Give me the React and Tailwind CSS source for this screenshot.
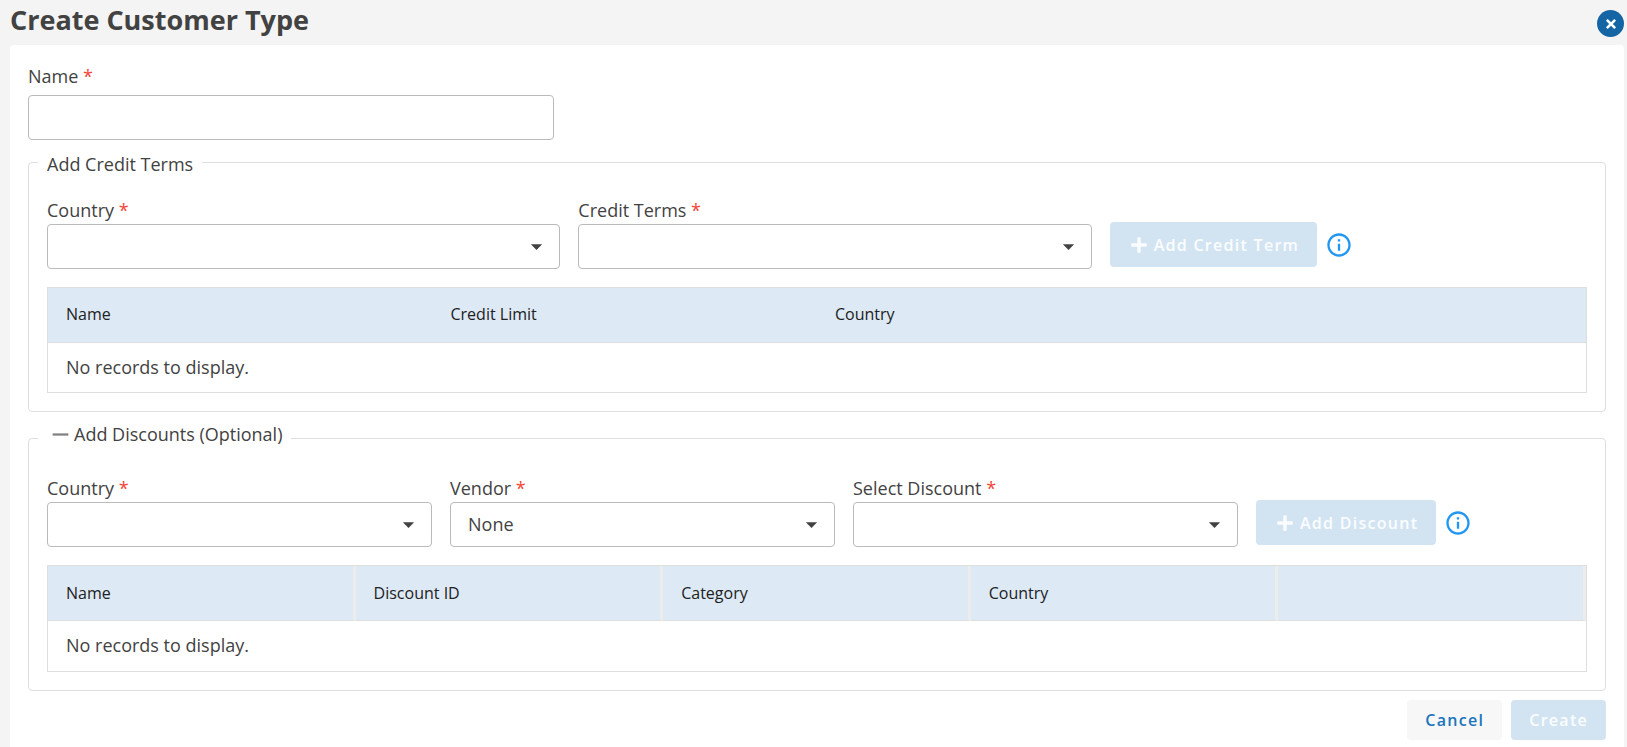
import React, { useState } from "react";
import { FaPlus, FaTimes } from "react-icons/fa";
import { MdArrowDropDown, MdInfoOutline, MdRemove } from "react-icons/md";

const creditColumns = ["Name", "Credit Limit", "Country", ""];
const discountColumns = ["Name", "Discount ID", "Category", "Country", ""];

const Label = ({ htmlFor, children }) => (
  <label htmlFor={htmlFor} className="block text-lg leading-[27px]">
    {children} <span className="text-[#f44336]">*</span>
  </label>
);

const SelectField = ({ id, label, options = [""], className }) => {
  const [value, setValue] = useState(options[0]);

  return (
    <div className={className}>
      <Label htmlFor={id}>{label}</Label>
      <div className="relative">
        <select
          id={id}
          value={value}
          onChange={(e) => setValue(e.target.value)}
          className="block w-full h-[45px] pl-[17px] pr-10 pb-0.5 text-lg appearance-none rounded border border-[#bababa] bg-white"
        >
          {options.map((option) => (
            <option key={option} value={option}>
              {option}
            </option>
          ))}
        </select>
        <MdArrowDropDown
          size={27}
          className="absolute right-2.5 top-[9px] pointer-events-none"
        />
      </div>
    </div>
  );
};

const AddButton = ({ children, info }) => (
  <div className="flex items-center gap-2 mb-0.5">
    <button
      type="button"
      disabled
      className="flex items-center gap-1.5 h-[45px] pl-5 pr-[18px] rounded bg-[#d2e4f2] text-white/90 font-semibold tracking-[0.08em] whitespace-nowrap"
    >
      <FaPlus size={18} />
      {children}
    </button>
    <button type="button" aria-label={info} className="text-[#2196f3]">
      <MdInfoOutline size={28} />
    </button>
  </div>
);

const DataTable = ({ columns, divided }) => (
  <table className="w-full mt-[18px] table-fixed border border-[#dedede] border-separate border-spacing-0">
    <thead>
      <tr className="h-[55px] bg-[#dde9f5]">
        {columns.map((column, idx) => (
          <th
            key={idx}
            scope="col"
            className={
              divided
                ? "px-[18px] text-left text-base font-normal text-[#212121] border-b border-b-[#dedede] border-r-3 border-r-[#ececec]"
                : "px-[18px] pb-0.5 text-left text-base font-normal text-[#212121] border-b border-b-[#dedede]"
            }
          >
            {column}
          </th>
        ))}
      </tr>
    </thead>
    <tbody>
      <tr className={divided ? "h-[50px]" : "h-[49px]"}>
        <td colSpan={columns.length} className="px-[18px] pb-0.5 text-lg">
          No records to display.
        </td>
      </tr>
    </tbody>
  </table>
);

const App = () => {
  const [name, setName] = useState("");

  return (
    <div className="min-h-screen flex flex-col bg-[#f4f4f4] text-[#424242] font-['Open_Sans',sans-serif]">
      <header className="flex items-start justify-between h-[45px] pl-2.5 pr-[3px]">
        <h1 className="text-[27px] leading-10 font-bold">
          Create Customer Type
        </h1>
        <button
          type="button"
          aria-label="Close"
          className="flex items-center justify-center size-[27px] mt-2.5 rounded-full bg-[#1565a5] text-white"
        >
          <FaTimes size={14} />
        </button>
      </header>

      <form className="flex-1 ml-2.5 mr-[3px] px-[18px] pt-[18px] pb-[7px] rounded-t bg-white">
        <div className="w-1/3">
          <Label htmlFor="name">Name</Label>
          <input
            id="name"
            type="text"
            value={name}
            onChange={(e) => setName(e.target.value)}
            className="block w-full h-[45px] mt-[5px] px-[17px] text-lg rounded border border-[#bababa]"
          />
        </div>

        <fieldset className="mt-[7px] px-[18px] pt-[19px] pb-[18px] rounded border border-[#dedede]">
          <legend className="-ml-[9px] px-[9px] pt-1 text-lg leading-[27px]">
            Add Credit Terms
          </legend>
          <div className="flex items-end gap-[18px]">
            <SelectField
              id="credit-country"
              label="Country"
              className="w-1/3"
            />
            <SelectField
              id="credit-terms"
              label="Credit Terms"
              className="w-1/3"
            />
            <AddButton info="About credit terms">Add Credit Term</AddButton>
          </div>
          <DataTable columns={creditColumns} />
        </fieldset>

        <fieldset className="mt-[9px] px-[18px] pt-[19px] pb-[18px] rounded border border-[#dedede]">
          <legend className="-ml-[9px] px-[9px] pb-2 text-lg leading-[27px]">
            <span className="flex items-center">
              <button
                type="button"
                aria-label="Collapse discounts"
                className="text-[#808080]"
              >
                <MdRemove size={27} />
              </button>
              Add Discounts (Optional)
            </span>
          </legend>
          <div className="flex items-end gap-[18px]">
            <SelectField
              id="discount-country"
              label="Country"
              className="w-1/4"
            />
            <SelectField
              id="discount-vendor"
              label="Vendor"
              options={["None"]}
              className="w-1/4"
            />
            <SelectField
              id="discount"
              label="Select Discount"
              className="w-1/4"
            />
            <AddButton info="About discounts">Add Discount</AddButton>
          </div>
          <DataTable columns={discountColumns} divided />
        </fieldset>

        <div className="flex justify-end gap-[9px] mt-[9px]">
          <button
            type="button"
            className="h-10 px-[18px] rounded bg-[#f7f7f7] text-[#1b75bb] font-semibold tracking-[0.08em]"
          >
            Cancel
          </button>
          <button
            type="submit"
            disabled
            className="h-10 px-[18px] rounded bg-[#d2e4f2] text-white/90 font-semibold tracking-[0.08em]"
          >
            Create
          </button>
        </div>
      </form>
    </div>
  );
};

export default App;
